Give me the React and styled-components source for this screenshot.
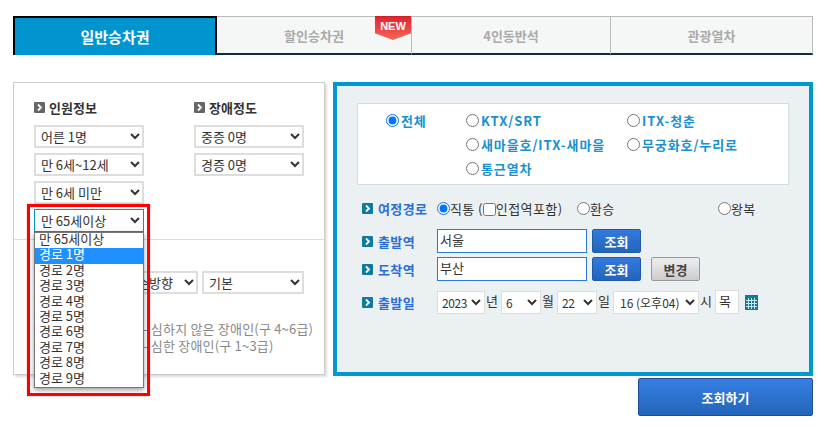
import React from 'react';
import styled, { createGlobalStyle } from 'styled-components';

const GlobalStyle = createGlobalStyle`
  html, body {
    margin: 0;
    padding: 0;
    background: #fff;
  }
  body {
    font-family: "Noto Sans CJK KR", "Liberation Sans", sans-serif;
    font-size: 14px;
    color: #333;
  }
  * { box-sizing: border-box; }
`;

const Page = styled.div`
  width: 834px;
  height: 435px;
  overflow: hidden;
  padding: 16px 21px 0 13px;
`;

const Tabs = styled.div`
  display: flex;
  height: 39px;
  margin-bottom: 27px;
`;

const Tab = styled.div`
  position: relative;
  width: ${p => p.$width}px;
  display: flex;
  align-items: center;
  justify-content: center;
  font-weight: 700;
  font-size: ${p => (p.$active ? 15 : 13)}px;
  color: ${p => (p.$active ? '#fff' : '#aaa')};
  background: ${p => (p.$active ? '#0095ce' : '#f5f7f6')};
  border: ${p => (p.$active ? '2px solid #000' : '1px solid #bbb')};
  border-left-width: ${p => (p.$active ? 2 : 0)}px;
  border-bottom: ${p => (p.$active ? '0' : '2px solid #0d2b47')};
`;

const NewBadge = styled.span`
  position: absolute;
  top: -1px;
  right: 0;
  width: 36px;
  height: 24px;
  padding-top: 3px;
  text-align: center;
  font: 700 11px/13px "Liberation Sans", sans-serif;
  color: #fff;
  border-top: 1px solid #c9222a;
  background: linear-gradient(#e4242b, #f2675c);
  clip-path: polygon(0 0, 100% 0, 100% 72%, 50% 100%, 0 72%);
`;

const Main = styled.div`
  display: flex;
  gap: 8px;
  align-items: flex-start;
`;

const LeftPanel = styled.div`
  position: relative;
  width: 312px;
  height: 293px;
  background: #fff;
  border: 1px solid #ccc;
  box-shadow: 2px 2px 2px #ddd;
`;

const PeopleSection = styled.div`
  display: grid;
  grid-template-columns: 160px 110px;
  height: 157px;
  padding: 15px 20px 0;
  border-bottom: 1px solid #ddd;
`;

const Column = styled.div`
  display: flex;
  flex-direction: column;
  gap: 5px;
`;

const Heading = styled.h3`
  display: flex;
  align-items: center;
  gap: 4px;
  height: 19px;
  margin: 0 0 3px;
  font-size: 13px;
  font-weight: 700;
  color: #333;
`;

const Marker = ({ color }) => (
  <svg width="11" height="11" viewBox="0 0 11 11" style={{ flex: 'none' }}>
    <rect width="11" height="11" rx="1" fill={color} />
    <path d="M4 2.5 L7 5.5 L4 8.5" fill="none" stroke="#fff" strokeWidth="1.8" />
  </svg>
);

const Select = styled.select`
  width: ${p => p.$width || 110}px;
  height: 23px;
  padding: 0 0 0 2px;
  font-family: inherit;
  font-size: 13px;
  color: #333;
  background-color: ${p => (p.$focus ? '#fdfdfd' : '#fff')};
  border: ${p => (p.$focus ? '1px solid #0095ce' : '1px solid #ddd')};
  outline: ${p => (p.$focus ? '0' : '1px solid #ddd')};
  outline-offset: -2px;
  border-radius: 0;
`;

const SeatSection = styled.div`
  padding: 31px 20px 0;
`;

const SeatRow = styled.div`
  display: flex;
  justify-content: flex-end;
  gap: 4px;
`;

const Notes = styled.div`
  margin-top: 26px;
  padding-left: 109px;
  font-size: 13px;
  letter-spacing: 0.2px;
  line-height: 17px;
  white-space: nowrap;
  color: #888;
`;

const Frame = styled.div`
  position: absolute;
  left: 13px;
  top: 121px;
  width: 123px;
  height: 192px;
  border: 3px solid #f00;
  box-shadow: 0 0 1px #f66;
  pointer-events: none;
`;

const OptionList = styled.ul`
  position: absolute;
  left: 20px;
  top: 149px;
  width: 110px;
  height: 156px;
  margin: 0;
  padding: 0;
  list-style: none;
  display: flex;
  flex-direction: column;
  background: #fff;
  border: 1px solid #767676;
  box-shadow: 0 2px 5px rgba(0, 0, 0, 0.4);
`;

const OptionItem = styled.li`
  flex: 1;
  padding-left: 4px;
  font-size: 13px;
  line-height: 12px;
  white-space: nowrap;
  color: ${p => (p.$selected ? '#fff' : '#333')};
  background: ${p => (p.$selected ? '#1e90ff' : 'transparent')};
`;

const RightPanel = styled.div`
  width: 480px;
  height: 294px;
  padding: 17px 20px 0;
  background: #ebf0f3;
  border: 4px solid #0099cf;
`;

const TrainBox = styled.div`
  display: grid;
  grid-template-columns: 80px 161px 1fr;
  grid-auto-rows: 24px;
  height: 82px;
  padding: 4px 0 0 28px;
  background: #fff;
  border: 1px solid #d8dcdf;
`;

const Choice = styled.label`
  display: flex;
  align-items: center;
  gap: 2px;
  font-size: 13px;
  font-weight: 700;
  letter-spacing: 0.9px;
  color: #1b8fd0;
  white-space: nowrap;
  grid-column: ${p => p.$col || 'auto'};
`;

const Radio = styled.input.attrs({ type: 'radio' })`
  width: 13px;
  height: 13px;
  margin: 0;
  flex: none;
`;

const Route = styled.div`
  display: flex;
  flex-direction: column;
  margin-top: 11px;
  padding-left: 5px;
`;

const FormRow = styled.div`
  display: flex;
  align-items: center;
  min-height: 24px;
  margin-top: ${p => p.$gap || 0}px;
`;

const RowLabel = styled.div`
  display: flex;
  align-items: center;
  gap: 5px;
  width: 75px;
  flex: none;
  font-size: 13px;
  font-weight: 700;
  letter-spacing: 0.4px;
  color: #2a6fd6;
  white-space: nowrap;
`;

const Option = styled.label`
  display: flex;
  align-items: center;
  width: ${p => p.$width}px;
  font-size: 13px;
  letter-spacing: 0.4px;
  color: #333;
  white-space: nowrap;
`;

const Check = styled.input.attrs({ type: 'checkbox' })`
  width: 13px;
  height: 13px;
  margin: 0 0 -3px;
`;

const StationInput = styled.input`
  width: 150px;
  height: 24px;
  padding: 0 2px 4px;
  font-family: inherit;
  font-size: 13px;
  color: #333;
  background: #fff;
  border: 1px solid #2a78d8;
  border-radius: 0;
`;

const Button = styled.button`
  width: 49px;
  height: 24px;
  padding: 0;
  margin-left: ${p => p.$gap || 5}px;
  font-family: inherit;
  font-size: 13px;
  font-weight: 700;
  color: ${p => (p.$plain ? '#444' : '#fff')};
  background: ${p => (p.$plain ? 'linear-gradient(#eee, #ccc)' : 'linear-gradient(#347ade, #2265ba)')};
  border: 1px solid ${p => (p.$plain ? '#999' : '#1f5aa8')};
  border-radius: 2px;
`;

const DateSelect = styled.select`
  width: ${p => p.$width}px;
  height: 23px;
  padding: 0 0 0 ${p => (p.$wide ? 2 : 0)}px;
  font-family: inherit;
  font-size: 12px;
  letter-spacing: ${p => (p.$wide ? 0 : -0.4)}px;
  color: #333;
  background: #fff;
  border: 1px solid #ddd;
  border-radius: 0;
`;

const Unit = styled.span`
  width: 16px;
  padding-left: 1px;
  margin-bottom: 4px;
  font-size: 13px;
  color: #333;
`;

const DayBox = styled.div`
  width: 24px;
  height: 24px;
  padding-left: 3px;
  font-size: 13px;
  line-height: 20px;
  background: #fff;
  border: 1px solid #ddd;
`;

const Footer = styled.div`
  display: flex;
  justify-content: flex-end;
  margin-top: 2px;
`;

const SearchButton = styled.button`
  width: 175px;
  height: 38px;
  font-family: inherit;
  font-size: 13px;
  font-weight: 700;
  color: #fff;
  background: linear-gradient(#377fe3, #2265ba);
  border: 1px solid #1d4e96;
  border-radius: 2px;
`;

const CalendarIcon = () => (
  <svg width="13" height="15" viewBox="0 0 13 15" style={{ marginLeft: 6 }}>
    <rect width="13" height="15" fill="#0d7aa0" />
    {[3, 6, 9].map(x => <rect key={x} x={x} y="3" width="1" height="11" fill="#cfe6ee" />)}
    {[5, 8, 11].map(y => <rect key={y} x="1" y={y} width="11" height="1" fill="#cfe6ee" />)}
  </svg>
);

const seniors = ['만 65세이상', '경로 1명', '경로 2명', '경로 3명', '경로 4명', '경로 5명', '경로 6명', '경로 7명', '경로 8명', '경로 9명'];

const App = () => {
  return (
    <Page>
      <GlobalStyle />
      <Tabs>
        <Tab $active $width={204}>일반승차권</Tab>
        <Tab $width={195}>
          할인승차권
          <NewBadge>NEW</NewBadge>
        </Tab>
        <Tab $width={199}>4인동반석</Tab>
        <Tab $width={202}>관광열차</Tab>
      </Tabs>
      <Main>
        <LeftPanel>
          <PeopleSection>
            <Column>
              <Heading><Marker color="#666" />인원정보</Heading>
              <Select><option>어른 1명</option></Select>
              <Select><option>만 6세~12세</option></Select>
              <Select><option>만 6세 미만</option></Select>
              <Select $focus><option>만 65세이상</option></Select>
            </Column>
            <Column>
              <Heading><Marker color="#666" />장애정도</Heading>
              <Select><option>중증 0명</option></Select>
              <Select><option>경증 0명</option></Select>
            </Column>
          </PeopleSection>
          <SeatSection>
            <SeatRow>
              <Select $width={68}><option>순방향</option></Select>
              <Select $width={102}><option>기본</option></Select>
            </SeatRow>
            <Notes>
              <div>- 심하지 않은 장애인(구 4~6급)</div>
              <div>- 심한 장애인(구 1~3급)</div>
            </Notes>
          </SeatSection>
          <OptionList>
            {seniors.map((name, i) => (
              <OptionItem key={name} $selected={i === 1}>{name}</OptionItem>
            ))}
          </OptionList>
          <Frame />
        </LeftPanel>
        <RightPanel>
          <TrainBox>
            <Choice><Radio name="train" defaultChecked />전체</Choice>
            <Choice><Radio name="train" />KTX/SRT</Choice>
            <Choice><Radio name="train" />ITX-청춘</Choice>
            <Choice $col="2"><Radio name="train" />새마을호/ITX-새마을</Choice>
            <Choice><Radio name="train" />무궁화호/누리로</Choice>
            <Choice $col="2"><Radio name="train" />통근열차</Choice>
          </TrainBox>
          <Route>
            <FormRow>
              <RowLabel><Marker color="#0d7aa0" />여정경로</RowLabel>
              <Option $width={140}><Radio name="way" defaultChecked />직통 (<Check />인접역포함)</Option>
              <Option $width={141}><Radio name="way" />환승</Option>
              <Option $width={40}><Radio name="way" />왕복</Option>
            </FormRow>
            <FormRow $gap={9}>
              <RowLabel><Marker color="#0d7aa0" />출발역</RowLabel>
              <StationInput defaultValue="서울" />
              <Button>조회</Button>
            </FormRow>
            <FormRow $gap={4}>
              <RowLabel><Marker color="#0d7aa0" />도착역</RowLabel>
              <StationInput defaultValue="부산" />
              <Button>조회</Button>
              <Button $plain $gap={10}>변경</Button>
            </FormRow>
            <FormRow $gap={9}>
              <RowLabel><Marker color="#0d7aa0" />출발일</RowLabel>
              <DateSelect $width={48}><option>2023</option></DateSelect>
              <Unit>년</Unit>
              <DateSelect $width={40}><option>6</option></DateSelect>
              <Unit>월</Unit>
              <DateSelect $width={40}><option>22</option></DateSelect>
              <Unit>일</Unit>
              <DateSelect $wide $width={86}><option>16 (오후04)</option></DateSelect>
              <Unit>시</Unit>
              <DayBox>목</DayBox>
              <CalendarIcon />
            </FormRow>
          </Route>
        </RightPanel>
      </Main>
      <Footer>
        <SearchButton>조회하기</SearchButton>
      </Footer>
    </Page>
  );
};

export default App;
